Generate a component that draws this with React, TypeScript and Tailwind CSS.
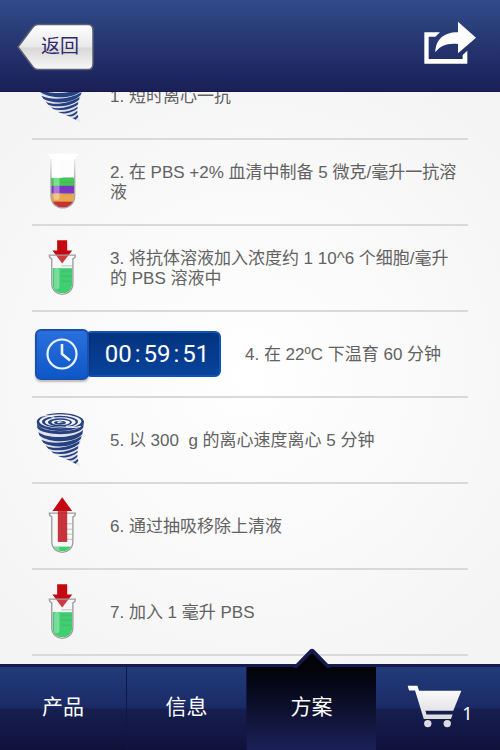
import type { ReactNode } from "react";

const FONT = "font-['Liberation_Sans','Noto_Sans_CJK_SC',sans-serif]";

function BackButton() {
  return (
    <button type="button" className="relative flex h-12 w-20 items-center justify-center pl-2 text-[19px] text-[#2e2a6b]">
      <svg viewBox="0 0 80 48" className="absolute inset-0 h-full w-full" aria-hidden="true">
        <defs>
          <linearGradient id="back" x1="0" y1="0" x2="0" y2="1">
            <stop offset="0" stopColor="#ffffff" />
            <stop offset="0.5" stopColor="#e9e9e9" />
            <stop offset="0.52" stopColor="#d8d8d8" />
            <stop offset="1" stopColor="#f8f8f8" />
          </linearGradient>
        </defs>
        <path
          d="M2 24 17 4Q19 1.500 22 1.500H72Q77 1.500 77 7.500V40.500Q77 46.500 72 46.500H22Q19 46.500 17 44Z"
          fill="url(#back)"
          stroke="#5a5f72"
          strokeWidth="1.500"
        />
      </svg>
      <span className="relative">返回</span>
    </button>
  );
}

function ShareIcon() {
  return (
    <svg viewBox="74 65 156 130" className="h-11 w-[52px]" fill="#fff" aria-hidden="true">
      <path d="M75 98H122L108 111H88V178H190V166L204 153V192H75Z" />
      <path d="M108 158C109 122 130 98 176 98V66L230 114L176 161V133C145 129 121 138 108 158Z" />
    </svg>
  );
}

function TornadoIcon() {
  return (
    <svg viewBox="50 32 159 168" className="h-14 w-[53px]" aria-hidden="true">
      <path
        d="M54 70C56 100 72 132 102 156C122 168 155 178 184 197C174 180 171 165 176 145C184 120 191 100 193 68Z"
        fill="#dfe3ed"
      />
      <g fill="#27407f">
        <path d="M53 64C60 98 186 98 193 64L192 78C178 106 72 104 54 80Z" />
        <path d="M57 93C85 114 165 112 191 86L189 98C165 126 92 126 61 103Z" />
        <path d="M66 115C95 130 155 126 187 104L184 113C160 139 105 142 72 124Z" />
        <path d="M79 133C105 146 150 138 181 119L179 127C157 147 112 151 87 142Z" />
        <path d="M95 150C120 157 150 150 177 134L175 142C156 156 125 162 103 156Z" />
        <path d="M116 164C138 165 158 160 175 148L174 154C160 165 140 170 127 168Z" />
        <path d="M140 174C153 174 164 169 174 160L174 166C168 174 158 178 149 177Z" />
        <path d="M159 182C166 181 171 177 175 172L177 178L169 187Z" />
      </g>
      <ellipse cx="123" cy="62" rx="71" ry="27" fill="#27407f" />
      <ellipse cx="123" cy="60" rx="63" ry="21" fill="#f1f3f8" />
      <ellipse cx="122" cy="61" rx="54" ry="18" fill="#27407f" />
      <ellipse cx="123" cy="62" rx="46" ry="14" fill="#f1f3f8" />
      <ellipse cx="122" cy="63" rx="36" ry="12" fill="#27407f" />
      <ellipse cx="124" cy="63" rx="28" ry="8" fill="#f1f3f8" />
      <ellipse cx="122" cy="64" rx="18" ry="6" fill="#27407f" />
      <path d="M112 62Q122 57 133 63Q124 62 118 66Z" fill="#f1f3f8" />
      <path d="M60 44Q85 41 105 48M140 76Q165 80 184 75" stroke="#f1f3f8" strokeWidth="4" fill="none" />
    </svg>
  );
}

function LayeredTubeIcon() {
  return (
    <svg viewBox="76 188 100 172" className="h-[57px] w-[33px]" aria-hidden="true">
      <clipPath id="layers">
        <path d="M91 200H163V318C163 366 91 366 91 318Z" />
      </clipPath>
      <g clipPath="url(#layers)">
        <rect x="88" y="196" width="80" height="70" fill="#fdfdfd" />
        <rect x="88" y="263" width="80" height="26" fill="#3ecb55" />
        <rect x="88" y="287" width="80" height="24" fill="#7b36c4" />
        <rect x="88" y="311" width="80" height="25" fill="#e8a64d" />
        <rect x="88" y="335" width="80" height="25" fill="#c43232" />
        <rect x="99" y="210" width="18" height="120" rx="8" fill="#fff" opacity="0.350" />
      </g>
      <defs>
        <linearGradient id="glass" gradientUnits="userSpaceOnUse" x1="0" y1="200" x2="0" y2="270">
          <stop offset="0" stopColor="#f4f4f4" />
          <stop offset="1" stopColor="#a9a5ab" />
        </linearGradient>
      </defs>
      <path d="M91 200V318C91 366 163 366 163 318V200" fill="none" stroke="url(#glass)" strokeWidth="4" />
      <rect x="80" y="190" width="93" height="7" rx="3" fill="#fff" />
      <rect x="88" y="195" width="78" height="10" fill="#fff" />
      <path d="M126 262H158M126 277H160M126 311H158" stroke="#6d8170" strokeWidth="2" opacity="0.600" />
    </svg>
  );
}

function TubeIcon({ level, arrow }: { level: number; arrow: "in" | "out" }) {
  return (
    <svg viewBox="84 42 86 170" className="h-[57px] w-[29px]" aria-hidden="true">
      {arrow === "in" && <path d="M111 46H141V76H156L126 115L97 76H111Z" fill="#c40a10" />}
      <path
        d="M88 90H165Q166 99 158 101V174C158 218 95 218 95 174V101Q87 99 88 90Z"
        fill="#fafafa"
        fillOpacity="0.200"
      />
      <clipPath id={`tube-${arrow}`}>
        <path d="M97 101H156V174C156 214 97 214 97 174Z" />
      </clipPath>
      <g clipPath={`url(#tube-${arrow})`}>
        <rect x="90" y={level} width="75" height={215 - level} fill="#3fcf70" />
        <rect x="102" y={level} width="16" height="63" rx="8" fill="#fff" opacity="0.300" />
      </g>
      <path d="M124 122H156M124 138H156M124 153H156M124 168H156" stroke="#5d9b72" strokeWidth="2" opacity="0.700" />
      <path
        d="M88 90H165Q166 99 158 101V174C158 218 95 218 95 174V101Q87 99 88 90Z"
        fill="none"
        stroke="#9b9da0"
        strokeWidth="4"
      />
      {arrow === "out" && (
        <>
          <path d="M126 43L156 84H97Z" fill="#c40a10" />
          <rect x="113" y="84" width="28" height="92" fill="#c3232c" opacity="0.920" />
        </>
      )}
    </svg>
  );
}

function Timer() {
  return (
    <div className="ml-[3px] flex items-center">
      <button
        type="button"
        aria-label="计时器"
        className="z-10 flex h-[51px] w-[54px] items-center justify-center rounded-md border-2 border-[#1a4fab] bg-linear-to-b from-[#2a6fdc] to-[#0c58c8] shadow-[0_2px_2px_rgba(0,0,0,0.25)]"
      >
        <svg viewBox="0 0 32 32" className="h-8 w-8" fill="none" stroke="#e8f4ff" strokeWidth="2.200" aria-hidden="true">
          <circle cx="16" cy="16" r="14.500" />
          <path d="M16 6V16L24 22.500" strokeWidth="2.600" />
        </svg>
      </button>
      <div
        role="timer"
        className="-ml-1 flex h-[46px] w-[136px] items-center justify-center gap-[3px] rounded-md border-2 border-[#0e52b8] bg-linear-to-b from-[#04337f] to-[#08439c] pl-2 font-['Roboto',sans-serif] text-2xl text-white"
      >
        <span>00</span>
        <span>:</span>
        <span>59</span>
        <span>:</span>
        <span>51</span>
      </div>
    </div>
  );
}

function Step({ icon, children }: { icon: ReactNode; children: ReactNode }) {
  return (
    <li className="flex h-[86px] shrink-0 items-center gap-[18px] border-b-2 border-[#d9d9d9]">
      <div className="flex w-[60px] shrink-0 justify-center pb-px">{icon}</div>
      <p className="pt-0.5 pr-2">{children}</p>
    </li>
  );
}

function CartIcon() {
  return (
    <svg viewBox="505 142 164 128" className="h-[43px] w-[55px]" aria-hidden="true">
      <defs>
        <linearGradient id="cart" x1="0" y1="0" x2="0" y2="1">
          <stop offset="0" stopColor="#fff" />
          <stop offset="1" stopColor="#dcdce0" />
        </linearGradient>
      </defs>
      <path
        fillRule="evenodd"
        d="M507 144H536L541 159H667L643 219H560L563 230H641L636 243H555L529 158H511Z"
        fill="url(#cart)"
      />
      <circle cx="567" cy="257" r="11" fill="#dcdce0" />
      <circle cx="625" cy="257" r="11" fill="#dcdce0" />
    </svg>
  );
}

const tabClass =
  "flex items-center justify-center bg-[linear-gradient(#213b7a,#1b2a66_49%,#151f50_51%,#10113a)] pb-1 text-[21px] text-white";

export default function App() {
  return (
    <div className={`flex h-screen flex-col bg-[radial-gradient(circle_at_center,#ffffff,#f1f1f1)] text-[17px] leading-5 text-[#626262] ${FONT}`}>
      <header className="flex h-[92px] shrink-0 items-center justify-between border-b border-[#14184a] bg-linear-to-b from-[#304c8a] to-[#1b1f57] pt-0.5 pr-6 pl-4">
        <BackButton />
        <button type="button" aria-label="分享" className="-mt-2">
          <ShareIcon />
        </button>
      </header>

      <main className="flex min-h-0 flex-1 flex-col justify-end overflow-hidden px-8 pb-2">
        <ol>
          <Step icon={<TornadoIcon />}>1. 短时离心一抗</Step>
          <Step icon={<LayeredTubeIcon />}>2. 在 PBS +2% 血清中制备 5 微克/毫升一抗溶液</Step>
          <Step icon={<TubeIcon level={129} arrow="in" />}>3. 将抗体溶液加入浓度约 1 10^6 个细胞/毫升的 PBS 溶液中</Step>
          <li className="flex h-[86px] items-center gap-6 border-b-2 border-[#d9d9d9]">
            <Timer />
            <p className="pt-0.5">4. 在 22ºC 下温育 60 分钟</p>
          </li>
          <Step icon={<TornadoIcon />}>5. 以 300 &nbsp;g 的离心速度离心 5 分钟</Step>
          <Step icon={<TubeIcon level={190} arrow="out" />}>6. 通过抽吸移除上清液</Step>
          <Step icon={<TubeIcon level={129} arrow="in" />}>7. 加入 1 毫升 PBS</Step>
        </ol>
      </main>

      <nav className="grid h-[86px] shrink-0 grid-cols-[127fr_120fr_129fr_124fr] border-t-3 border-[#151b4c]">
        <a href="#products" className={`border-r border-[#0f1747] ${tabClass}`}>产品</a>
        <a href="#info" className={`border-r border-[#0f1747] ${tabClass}`}>信息</a>
        <a
          href="#protocol"
          aria-current="page"
          className="relative flex items-center justify-center bg-linear-to-b from-[#030308] to-[#1b2158] pb-1 text-[21px] text-white"
        >
          <svg viewBox="0 0 36 20" className="absolute -top-[19px] left-1/2 h-5 w-9 -translate-x-1/2" aria-hidden="true">
            <path d="M0 20V18L16 1.500Q18 0 20 1.500L36 18V20Z" fill="#151b4c" />
            <path d="M3 20 18 5 33 20Z" fill="#030308" />
          </svg>
          方案
        </a>
        <a href="#cart" aria-label="购物车 1" className={`pl-1 ${tabClass}`}>
          <CartIcon />
          <span className="mt-3 font-['Noto_Sans',sans-serif] text-lg">1</span>
        </a>
      </nav>
    </div>
  );
}
